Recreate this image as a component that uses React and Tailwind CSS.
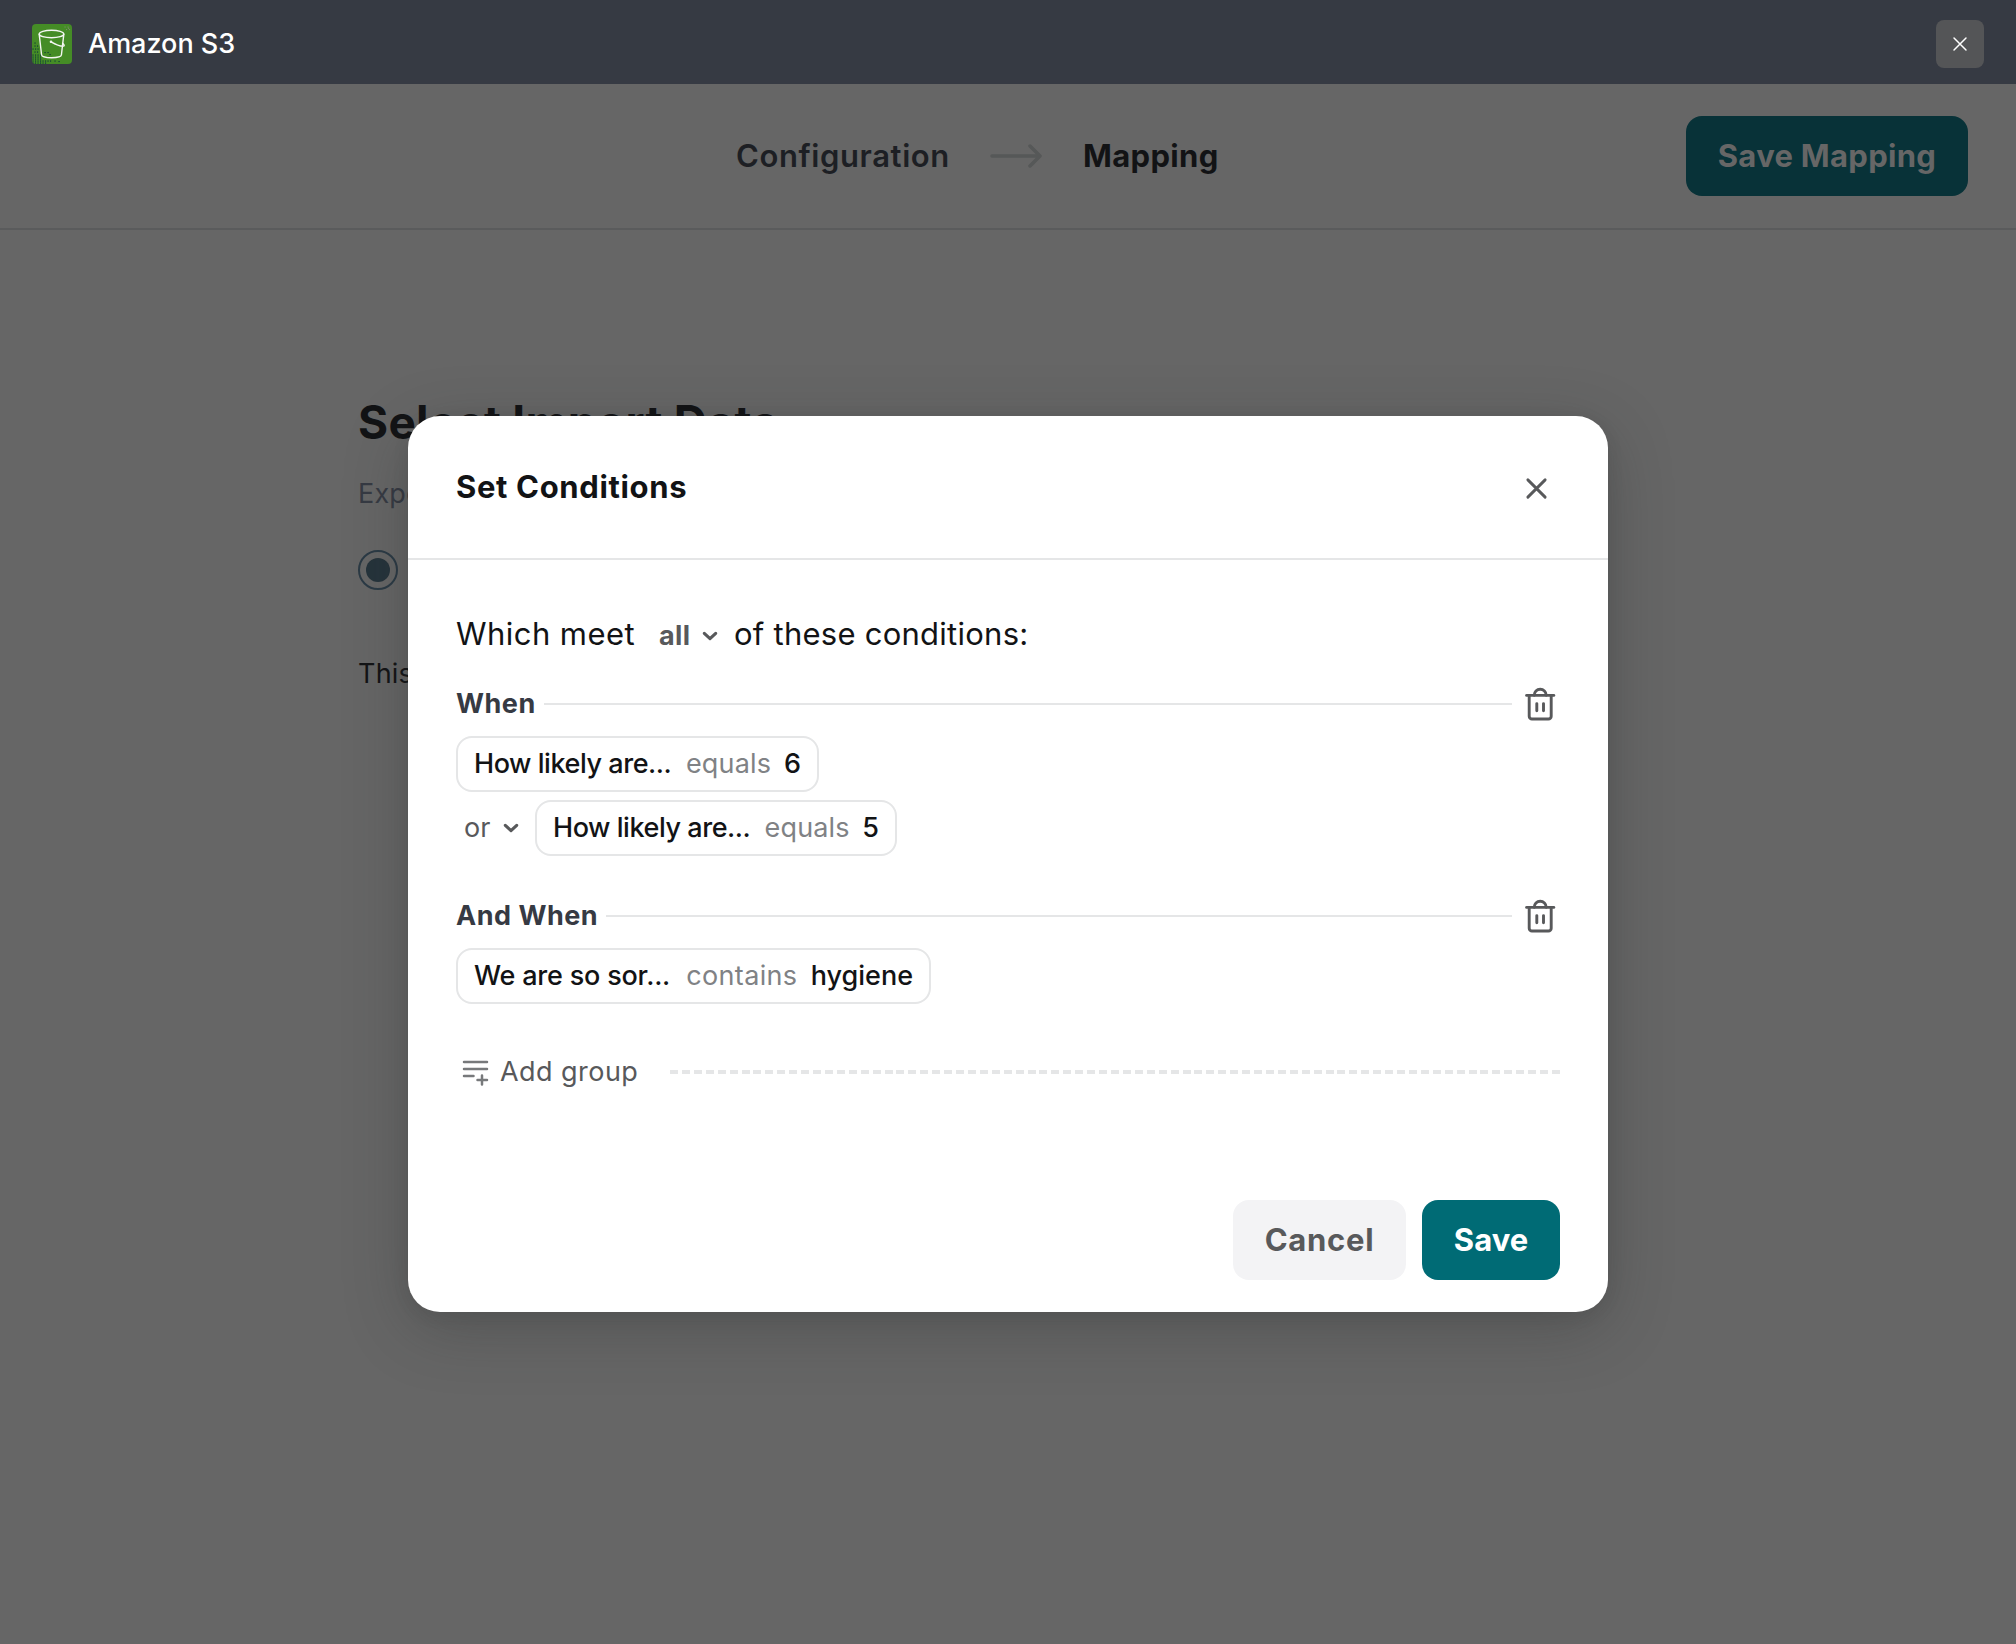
const DOT_ROWS = [
  [19, 2.5, 2.5],
  [22, 2.5, 5.5],
  [25, 0.5, 5.5],
  [28, 2.5, 5.5],
  [31, 0.5, 8],
  [33, 0.5, 8],
  [35, 0.5, 10],
  [37, 0.5, 20],
  [39, 0.5, 14],
];

function BucketLogo() {
  const dots = [];
  DOT_ROWS.forEach(([y, from, to]) => {
    for (let x = from; x <= to; x += 2.5) dots.push([x, y]);
  });
  [[12.5, 28.5], [15.5, 28.5], [17.5, 30.5], [22.5, 37], [26.5, 37.5]].forEach((d) => dots.push(d));
  return (
    <svg className="size-10 shrink-0 rounded" viewBox="0 0 40 40" fill="none">
      <rect width="40" height="40" fill="#458c26" />
      {dots.map(([x, y]) => (
        <rect key={`${x}-${y}`} x={x} y={y - 0.5} width="1.1" height="1.1" fill="#08323a" />
      ))}
      {[[32.5, 2.5], [35.5, 2.5], [34, 5], [37, 5], [36, 3.7]].map(([x, y]) => (
        <rect key={`${x}-${y}`} x={x} y={y} width="1.1" height="1.1" fill="#7b8a6c" />
      ))}
      <g stroke="#f4f6f2" strokeWidth="1.4" strokeLinecap="round" strokeLinejoin="round">
        <ellipse cx="19.5" cy="10" rx="12.3" ry="3.8" />
        <path d="M7.2 10.4 9.6 31c.2 1.4 4.5 2.8 10 2.8s9.6-1.3 9.8-2.8L31.8 10.4" />
        <path d="M19 17.8c3 1.7 9.5 4.5 12.5 4.3 1.3-.3.5-1.9-.9-2.9" />
      </g>
      <circle cx="19" cy="17.7" r="1.3" fill="#f4f6f2" />
    </svg>
  );
}

function Cross({ className, width }) {
  return (
    <svg className={className} viewBox="0 0 24 24" fill="none" stroke="currentColor" strokeWidth={width} strokeLinecap="round">
      <path d="M3 3 21 21M21 3 3 21" />
    </svg>
  );
}

function Chevron() {
  return (
    <svg width="16" height="12" viewBox="0 0 16 12" fill="none" stroke="currentColor" strokeWidth="3.1" strokeLinecap="round" strokeLinejoin="round">
      <path d="M2.3 3.3 8 8.7l5.7-5.4" />
    </svg>
  );
}

function TrashButton() {
  return (
    <button className="ml-2 h-12 w-10 shrink-0 text-[#58595b]" aria-label="Delete group">
      <svg width="40" height="48" viewBox="0 0 40 48" fill="none" stroke="currentColor" strokeWidth="2.9" strokeLinecap="round" strokeLinejoin="round">
        <path d="M6.6 15.4h27.2" />
        <path d="M9.2 15.4V36.200a2.8 2.8 0 0 0 2.8 2.8h16.4a2.8 2.8 0 0 0 2.8-2.800V15.4" />
        <path d="M14.2 15.2a6 6 0 0 1 12 0" />
        <path d="M16.8 23.600v7.200M23.500 23.600v7.200" />
      </svg>
    </button>
  );
}

function Chip({ className, field, tracking, op, opTracking, value }) {
  return (
    <div className={`flex h-14 items-center justify-between rounded-2xl border-2 border-[#e5e6e7] px-4 text-[27px] whitespace-nowrap ${className}`}>
      <span className={`w-[199px] font-medium text-[#121315] ${tracking}`}>{field}</span>
      <span className={`text-[#808285] ${opTracking}`}>{op}</span>
      <span className="font-medium text-[#121315]">{value}</span>
    </div>
  );
}

function GroupHeader({ children }) {
  return (
    <div className="flex h-12 items-center">
      <h3 className="mr-2 pb-0.5 text-[27px] leading-none font-bold tracking-[0.5px] text-[#363a43]">{children}</h3>
      <div className="mb-px h-0.5 flex-1 bg-[#e5e6e7]" />
      <TrashButton />
    </div>
  );
}

export default function App() {
  return (
    <div className="relative flex h-[1644px] w-full flex-col overflow-hidden bg-[#666666] font-['Inter',sans-serif]">
      <header className="flex h-[84px] shrink-0 items-center bg-[#363a43] px-8 pt-1">
        <BucketLogo />
        <span className="ml-4 text-[27px] font-medium text-white">Amazon S3</span>
        <button className="ml-auto flex size-12 items-center justify-center rounded-lg bg-[#545557] text-white" aria-label="Close">
          <Cross className="size-4" width={2.2} />
        </button>
      </header>

      <nav className="flex h-[146px] shrink-0 items-center border-b-2 border-[#5a5b5c] pr-12 pl-[736px] text-[31px] whitespace-nowrap">
        <span className="w-[214px] font-semibold tracking-[0.6px] text-[#1d1f24]">Configuration</span>
        <svg className="ml-[39px]" width="54" height="26" viewBox="0 0 54 26" fill="none" stroke="#565858" strokeWidth="3.5" strokeLinecap="round" strokeLinejoin="round">
          <path d="M3 13h48M41 3 51 13 41 23" />
        </svg>
        <span className="ml-10 font-bold tracking-[0.35px] text-[#121315]">Mapping</span>
        <button className="ml-auto h-20 w-[282px] rounded-2xl bg-[#083238] font-bold tracking-[0.3px] text-[#666666]">Save Mapping</button>
      </nav>

      <main className="flex flex-col px-[358px] pt-[162px] whitespace-nowrap">
        <h1 className="text-[46px] leading-[60px] font-bold tracking-[0.3px] text-[#121315]">Select Import Data</h1>
        <p className="mt-[22px] text-[27px] leading-10 tracking-[0.2px] text-[#363a43]">Export</p>
        <span className="mt-9 flex size-10 items-center justify-center rounded-full border-2 border-[#2b3a45]">
          <span className="size-6 rounded-full bg-[#25333b]" />
        </span>
        <p className="mt-16 text-[27px] leading-10 tracking-[0.2px] text-[#121315]">This</p>
      </main>

      <div className="absolute inset-0 flex items-center justify-center pt-[84px]">
        <section className="flex h-[896px] w-[1200px] flex-col rounded-[32px] bg-white shadow-[0_16px_64px_rgba(40,44,44,0.3),0_4px_16px_rgba(40,44,44,0.1)]">
          <div className="flex h-36 items-center justify-between border-b-2 border-[#e5e6e7] px-12">
            <h2 className="text-[31px] font-bold tracking-[0.65px] text-[#121315]">Set Conditions</h2>
            <button className="mt-0.5 flex size-12 items-center justify-center text-[#58595b]" aria-label="Close dialog">
              <Cross className="size-[23px]" width={3} />
            </button>
          </div>

          <div className="flex flex-1 flex-col px-12 pt-[50px]">
            <div className="flex h-12 items-center text-[31px] whitespace-nowrap text-[#121315]">
              <span className="w-[179px] tracking-[0.45px]">Which meet</span>
              <button className="ml-6 flex w-[75px] items-center pt-1 text-left text-[27px] font-bold text-[#58595b]">
                <span className="w-[43px] tracking-[0.4px]">all</span>
                <Chevron />
              </button>
              <span className="tracking-[0.25px]">of these conditions:</span>
            </div>

            <div className="mt-[22px] flex flex-col gap-9">
              <div>
                <GroupHeader>When</GroupHeader>
                <div className="mt-2 flex flex-col gap-2">
                  <Chip className="w-[363px]" field="How likely are..." tracking="tracking-[-0.45px]" op="equals" opTracking="tracking-[0.15px]" value="6" />
                  <div className="flex items-center">
                    <button className="flex w-[79px] items-center pl-2 text-left text-[27px] text-[#58595b]">
                      <span className="w-[39px]">or</span>
                      <Chevron />
                    </button>
                    <Chip className="w-[362px]" field="How likely are..." tracking="tracking-[-0.45px]" op="equals" opTracking="tracking-[0.15px]" value="5" />
                  </div>
                </div>
              </div>

              <div>
                <GroupHeader>And When</GroupHeader>
                <div className="mt-2">
                  <Chip className="w-[475px]" field="We are so sor..." tracking="tracking-[-0.2px]" op="contains" opTracking="tracking-[0.35px]" value="hygiene" />
                </div>
              </div>
            </div>

            <div className="mt-11 flex h-12 items-center">
              <svg className="shrink-0 text-[#77797b]" width="44" height="48" viewBox="0 0 44 48" fill="none" stroke="currentColor" strokeWidth="2.5" strokeLinecap="round">
                <path d="M8 14h23M8 21h23M8 28h9.500M26 27.500v9M21.500 32h9.500" />
              </svg>
              <button className="text-[27px] tracking-[0.45px] whitespace-nowrap text-[#58595b]">Add group</button>
              <div className="ml-auto h-1 w-[890px] bg-[repeating-linear-gradient(90deg,#e5e6e7_0_8px,transparent_8px_11.919px)]" />
            </div>
          </div>

          <div className="flex justify-end gap-4 px-12 pb-8 text-[31px] font-bold">
            <button className="h-20 w-[173px] rounded-2xl bg-[#f3f3f5] tracking-[0.7px] text-[#58595b]">Cancel</button>
            <button className="h-20 w-[138px] rounded-2xl bg-[#006b75] text-white">Save</button>
          </div>
        </section>
      </div>
    </div>
  );
}
